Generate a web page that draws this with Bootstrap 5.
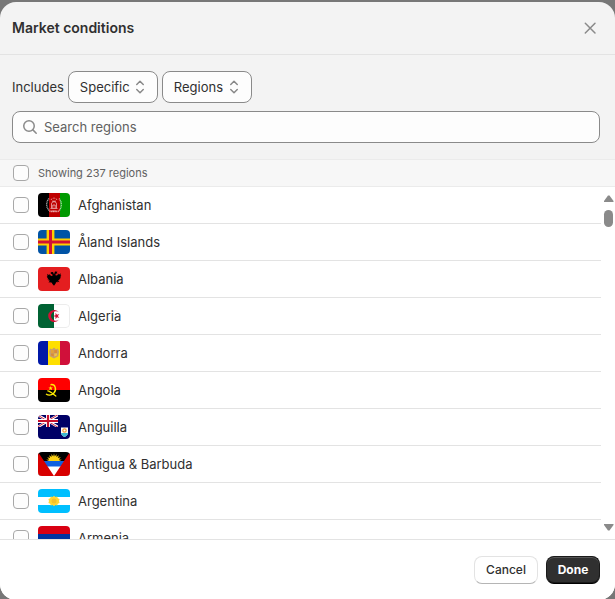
<!DOCTYPE html>
<html lang="en">
<head>
<meta charset="utf-8">
<meta name="viewport" content="width=device-width, initial-scale=1">
<title>Market conditions</title>
<link href="https://cdn.jsdelivr.net/npm/bootstrap@5.3.0/dist/css/bootstrap.min.css" rel="stylesheet">
<style>
  body { font-family: Inter, "Liberation Sans", sans-serif; font-size: 13px; line-height: 20px; font-weight: 400; color: #303030; background: #777; }
  .dialog-box { height: calc(100vh - 1px); min-height: 400px; margin-top: 2px; background: #f3f3f3; border-radius: 16px; }
  .page-frame { height: 100vh; }
  .dialog-head { height: 53px; padding: 0 15px 0 12px; border-bottom: 1px solid #e3e3e3; }
  .dialog-title { font-size: 14px; line-height: 20px; font-weight: 600; color: #303030; }
  .close-x { width: 20px; height: 20px; color: #8a8a8a; }
  .filters { padding: 16px 15px 16px 12px; }
  .pick { width: 90px; height: 32px; padding: 5px 11px; font-size: 13px; line-height: 20px; font-weight: 400; color: #303030; border-color: #8a8a8a; border-radius: 8px; background-color: #fdfdfd; background-size: 20px 20px; background-position: right 7px center;
    background-image: url("data:image/svg+xml,%3Csvg xmlns='http://www.w3.org/2000/svg' viewBox='0 0 20 20' fill='none' stroke='%238a8a8a' stroke-width='1.5' stroke-linecap='round' stroke-linejoin='round'%3E%3Cpath d='M6.75 7.5 10 4.25 13.25 7.5M6.75 12.5 10 15.75 13.25 12.5'/%3E%3C/svg%3E"); }
  .search-box { height: 32px; padding: 0 7px; gap: 4px; border: 1px solid #8a8a8a; border-radius: 8px; background: #fdfdfd; color: #8a8a8a; }
  .search-box input { font-size: 13px; line-height: 20px; font-weight: 400; color: #303030; }
  .search-box input::placeholder { color: #616161; opacity: 1; }
  .tick.form-check-input { width: 16px; height: 16px; margin: 0; border-color: #a8a8a8; border-radius: 4px; background-color: #fdfdfd; }
  .all-row { height: 28px; padding-left: 13px; gap: 9px; border-top: 1px solid #ebebeb; border-bottom: 1px solid #ebebeb; background: #f7f7f7; font-size: 11px; line-height: 16px; color: #616161; }
  .region-list { min-height: 0; scrollbar-width: none; }
  .region-list::-webkit-scrollbar { display: none; }
  .region-row { height: 37px; padding-left: 13px; gap: 9px; border-bottom: 1px solid #e3e3e3; }
  .region-row label { gap: 8px; color: #303030; }
  .flag { width: 32px; height: 24px; border-radius: 4px; }
  .rail { width: 14px; padding: 8px 0 8px 3px; color: #8a8a8a; }
  .thumb { width: 9px; height: 17px; border-radius: 5px; background: #8a8a8a; }
  .dialog-foot { padding: 16px 15px 16px; gap: 8px; border-top: 1px solid #e3e3e3; }
  .act.btn { height: 28px; padding: 3px 11px; font-size: 12px; line-height: 20px; border: 1px solid #e3e3e3; border-radius: 8px; font-weight: 500; }
  .act-plain.btn { min-width: 64px; background: #fff; color: #303030; border-bottom-color: #b5b5b5; }
  .act-main.btn { min-width: 54px; background: #303030; color: #fff; font-weight: 700; border: 1px solid #1a1a1a; border-bottom-color: #000; box-shadow: inset 0 1px 0 #555, inset 0 -1px 0 #1a1a1a; padding: 3px 10px; }
</style>
</head>
<body>
<div class="page-frame overflow-hidden">
<main class="dialog-box d-flex flex-column overflow-hidden" role="dialog" aria-labelledby="dlg-title">
  <header class="dialog-head d-flex flex-shrink-0 align-items-center justify-content-between">
    <h1 class="dialog-title mb-0" id="dlg-title">Market conditions</h1>
    <button type="button" class="close-x btn p-0 border-0 d-flex" aria-label="Close">
      <svg width="20" height="20" viewBox="0 0 20 20" fill="none" stroke="currentColor" stroke-width="1.5" stroke-linecap="round"><path d="M5.300 5.300l9.700 9.700M15 5.300L5.300 15"/></svg>
    </button>
  </header>

  <section class="filters d-flex flex-column flex-shrink-0 gap-2">
    <div class="d-flex align-items-center gap-1">
      <label for="scope">Includes</label>
      <select class="pick form-select" id="scope"><option>Specific</option><option>All</option></select>
      <select class="pick form-select" id="kind" aria-label="Condition type"><option>Regions</option><option>Companies</option></select>
    </div>
    <div class="search-box d-flex align-items-center">
      <svg class="flex-shrink-0" width="20" height="20" viewBox="0 0 20 20" fill="none" stroke="currentColor" stroke-width="1.5" stroke-linecap="round"><circle cx="9" cy="9" r="5.25"/><path d="M12.9 12.9L16.2 16.2"/></svg>
      <input class="form-control border-0 bg-transparent shadow-none p-0" type="search" placeholder="Search regions" aria-label="Search regions">
    </div>
  </section>

  <div class="all-row d-flex align-items-center flex-shrink-0">
    <input class="tick form-check-input flex-shrink-0" type="checkbox" id="r-all">
    <label for="r-all">Showing 237 regions</label>
  </div>

  <div class="region-list d-flex flex-grow-1 bg-white">
    <ul class="region-list list-unstyled mb-0 flex-grow-1 overflow-auto">
      <li class="region-row d-flex align-items-center">
        <input class="tick form-check-input flex-shrink-0" type="checkbox" id="r-af">
        <label class="d-flex align-items-center" for="r-af">
          <svg class="flag" viewBox="0 0 32 24"><path d="M0 0h11v24H0z"/><path fill="#be0000" d="M11 0h11v24H11z"/><path fill="#009a00" d="M22 0h10v24H22z"/><g fill="none" stroke="#fff"><path stroke-width="1.400" stroke-dasharray="1.2 .5" stroke-opacity=".6" d="M11 5.500c-3.500 4-3 10 1.500 13h7.500c4-3 4.500-9 1-13"/><path stroke-width=".8" stroke-opacity=".7" d="M12.500 15.500h7M13.500 15v-4c0-3 5-3 5 0v4M14.800 15v-3h2.400v3M13 7l1-1.500M16 6V4.500M19 7l-1-1.500M14 8.200h4M13.500 18h5"/></g></svg>
          Afghanistan
        </label>
      </li>
      <li class="region-row d-flex align-items-center">
        <input class="tick form-check-input flex-shrink-0" type="checkbox" id="r-ax">
        <label class="d-flex align-items-center" for="r-ax">
          <svg class="flag" viewBox="0 0 32 24"><path fill="#0053a5" d="M0 0h32v24H0z"/><path fill="#ffce00" d="M8.600 0h7.800v24H8.600zM0 8.400h32v7.200H0z"/><path fill="#d21034" d="M11 0h3v24h-3zM0 10.500h32v3H0z"/></svg>
          Åland Islands
        </label>
      </li>
      <li class="region-row d-flex align-items-center">
        <input class="tick form-check-input flex-shrink-0" type="checkbox" id="r-al">
        <label class="d-flex align-items-center" for="r-al">
          <svg class="flag" viewBox="0 0 32 24"><path fill="#e41e20" d="M0 0h32v24H0z"/><path d="M16 7.500l-1-2.500-2.500.2.800 1-1 .6 2 .4.300 1.600-1.600.3-1.500-2-.4 1.200-1.800-1.500.2 2-.8.200 1 1.200-.9.400 1.300 1-.7.700 1.600.200-.7 1.100 1.600-.1-1.400 2.200 1.900-.7.500 1.300 1-1 .3 1.500L16 18.800l1.800-2.500.3-1.500 1 1 .5-1.300 1.900.7-1.400-2.200 1.600.1-.7-1.100 1.600-.2-.7-.7 1.300-1-.9-.4 1-1.200-.8-.2.200-2-1.800 1.500-.4-1.200-1.500 2-1.600-.3.300-1.600 2-.4-1-.6.800-1-2.500-.2z"/></svg>
          Albania
        </label>
      </li>
      <li class="region-row d-flex align-items-center">
        <input class="tick form-check-input flex-shrink-0" type="checkbox" id="r-dz">
        <label class="d-flex align-items-center" for="r-dz">
          <svg class="flag" viewBox="0 0 32 24"><path fill="#fff" d="M0 0h32v24H0z"/><rect x=".5" y=".5" width="31" height="23" rx="3.5" fill="none" stroke="#ececec"/><path fill="#006233" d="M0 0h16v24H0z"/><path fill="#d21034" d="M21 8.400A6 6 0 1 0 21 15.600 4.800 4.800 0 1 1 21 8.400z"/><path fill="#d21034" d="M15.200 12l2.300-.8V8.800l1.500 2 2.300-.7-1.400 1.900 1.400 1.900-2.300-.7-1.500 2v-2.400z"/></svg>
          Algeria
        </label>
      </li>
      <li class="region-row d-flex align-items-center">
        <input class="tick form-check-input flex-shrink-0" type="checkbox" id="r-ad">
        <label class="d-flex align-items-center" for="r-ad">
          <svg class="flag" viewBox="0 0 32 24"><path fill="#0018a8" d="M0 0h10v24H0z"/><path fill="#fedf00" d="M10 0h12v24H10z"/><path fill="#d0103a" d="M22 0h10v24H22z"/><path fill="#c7a06a" d="M12 7.600l2 .7 2-1.800 2 1.800 2-.7 1 3-.7 4.600-4.300 2.400-4.300-2.400-.7-4.600z"/><path fill="#e3a13a" d="M13 9h2.700v3H13z"/><path fill="#d98a3a" d="M16.300 9H19v3h-2.700zM13 12.600h2.700v3L13 14.600z"/><path fill="#f0c14a" d="M16.300 12.600H19v2l-2.700 1z"/></svg>
          Andorra
        </label>
      </li>
      <li class="region-row d-flex align-items-center">
        <input class="tick form-check-input flex-shrink-0" type="checkbox" id="r-ao">
        <label class="d-flex align-items-center" for="r-ao">
          <svg class="flag" viewBox="0 0 32 24"><path fill="#f00" d="M0 0h32v12H0z"/><path d="M0 12h32v12H0z"/><path fill="none" stroke="#ffec00" stroke-width="1.400" d="M12.500 6.700c5-1 6.500 5.300 3.200 8.500-2.300 2.200-5.500 2.200-7.700.8"/><path fill="none" stroke="#ffec00" stroke-width="1.300" stroke-linecap="round" d="M9.800 12.800c2.500.3 5 3 8 5.200"/><path fill="#ffec00" d="M12.600 8l.6 1.600h1.700l-1.300 1 .5 1.600-1.500-.9-1.400.9.500-1.600-1.300-1h1.600z"/></svg>
          Angola
        </label>
      </li>
      <li class="region-row d-flex align-items-center">
        <input class="tick form-check-input flex-shrink-0" type="checkbox" id="r-ai">
        <label class="d-flex align-items-center" for="r-ai">
          <svg class="flag" viewBox="0 0 32 24"><path fill="#006" d="M0 0h32v24H0z"/><svg width="20" height="12" viewBox="0 0 20 12"><path stroke="#fff" stroke-width="2.400" d="M0 0l20 12M20 0L0 12"/><path stroke="#c8102e" stroke-width=".9" d="M0 .3l20 12M20-.3L0 11.700"/><path stroke="#fff" stroke-width="4" d="M10 0v12M0 6h20"/><path stroke="#c8102e" stroke-width="2.200" d="M10 0v12M0 6h20"/></svg><path fill="#fff" d="M23 12.500h7V17.500c0 2.200-1.600 3.700-3.500 4.500-1.900-.8-3.500-2.300-3.500-4.500z"/><path fill="#3bb6d3" d="M23 18h7c-.2 2-1.700 3.300-3.500 4-1.800-.7-3.300-2-3.500-4z"/><circle cx="26.500" cy="15.500" r="1.700" fill="none" stroke="#f39a32" stroke-width="1.200"/></svg>
          Anguilla
        </label>
      </li>
      <li class="region-row d-flex align-items-center">
        <input class="tick form-check-input flex-shrink-0" type="checkbox" id="r-ag">
        <label class="d-flex align-items-center" for="r-ag">
          <svg class="flag" viewBox="0 0 32 24"><path d="M0 0h32v24H0z"/><path fill="#fcd116" d="M16 1.500l.8 2.900 1.800-2.400-.2 3 2.600-1.700-1.200 2.700 3-.7-2 2.100 3 .3-2.700 1.300H11l-2.800-1.300 3-.3-2-2.100 3 .7L11 3.300 13.600 5l-.2-3 1.800 2.400z"/><path fill="#1060e0" d="M0 9h32v6H0z"/><path fill="#fff" d="M0 14.500h32V24H0z"/><path fill="#d80000" d="M0 0v24h16zM32 0v24H16z"/></svg>
          Antigua &amp; Barbuda
        </label>
      </li>
      <li class="region-row d-flex align-items-center">
        <input class="tick form-check-input flex-shrink-0" type="checkbox" id="r-ar">
        <label class="d-flex align-items-center" for="r-ar">
          <svg class="flag" viewBox="0 0 32 24"><path fill="#00bfff" d="M0 0h32v24H0z"/><path fill="#fff" d="M0 8h32v8H0z"/><path fill="#ffd735" d="M16 6.800l1.400 1.200 1.800-.6.600 1.800 1.800.8-.6 2 .6 2-1.800.8-.6 1.800-1.800-.6L16 17.200 14.600 16l-1.800.6-.6-1.800-1.800-.8.6-2-.6-2 1.800-.8.6-1.800 1.800.6z"/><circle cx="16" cy="12" r="2.500" fill="#f5c12a"/></svg>
          Argentina
        </label>
      </li>
      <li class="region-row d-flex align-items-center">
        <input class="tick form-check-input flex-shrink-0" type="checkbox" id="r-am">
        <label class="d-flex align-items-center" for="r-am">
          <svg class="flag" viewBox="0 0 32 24"><path fill="#d90012" d="M0 0h32v8H0z"/><path fill="#0033a0" d="M0 8h32v8H0z"/><path fill="#f2a800" d="M0 16h32v8H0z"/></svg>
          Armenia
        </label>
      </li>
    </ul>
    <div class="rail d-flex flex-column justify-content-between flex-shrink-0" aria-hidden="true">
      <div class="d-flex flex-column gap-2">
        <svg width="10" height="7" viewBox="0 0 10 7"><path fill="currentColor" d="M4 .5h1.500L9.500 6v1H0V6z"/></svg>
        <div class="thumb"></div>
      </div>
      <svg width="10" height="7" viewBox="0 0 10 7"><path fill="currentColor" d="M0 0h9.500v1l-4 5.500H4L0 1z"/></svg>
    </div>
  </div>

  <footer class="dialog-foot d-flex flex-shrink-0 justify-content-end bg-white">
    <button type="button" class="act act-plain btn">Cancel</button>
    <button type="button" class="act act-main btn">Done</button>
  </footer>
</main>
</div>
<script src="https://cdn.jsdelivr.net/npm/bootstrap@5.3.0/dist/js/bootstrap.bundle.min.js"></script>
</body>
</html>
